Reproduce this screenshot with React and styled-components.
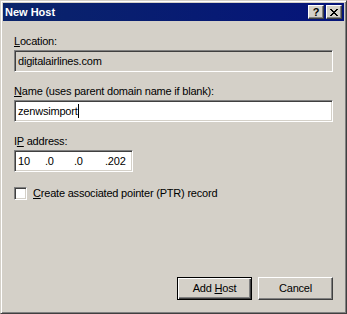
import React from "react";
import styled, { createGlobalStyle } from "styled-components";

const Global = createGlobalStyle`
  html, body { margin: 0; padding: 0; background: #d4d0c8; }
  body { font-family: "Liberation Sans", Arial, sans-serif; font-size: 11px; color: #000; }
  * { box-sizing: border-box; }
`;

const Window = styled.div`
  width: 347px;
  height: 314px;
  background: #d4d0c8;
  border: 1px solid;
  border-color: #d4d0c8 #404040 #404040 #d4d0c8;
  box-shadow: inset 1px 1px #fff, inset -1px -1px #808080;
  padding: 2px;
  display: flex;
  flex-direction: column;
`;

const TitleBar = styled.div`
  height: 18px;
  flex: none;
  display: flex;
  align-items: center;
  padding: 0 2px 0 2px;
  background: linear-gradient(to right, #0a246a, #05147a);
`;

const Title = styled.div`
  flex: 1;
  color: #fff;
  font-weight: bold;
  font-size: 11px;
  line-height: 13px;
  padding-left: 0px;
`;

const CapButton = styled.div`
  width: 16px;
  height: 14px;
  margin-left: ${(p) => p.$gap || 0}px;
  background: #d4d0c8;
  border: 1px solid;
  border-color: #fff #404040 #404040 #fff;
  box-shadow: inset -1px -1px #808080;
  display: flex;
  align-items: center;
  justify-content: center;
  font-weight: bold;
  font-size: 11px;
  line-height: 11px;
  color: #000;
`;

const Body = styled.div`
  flex: 1;
  display: flex;
  flex-direction: column;
  padding: 14px 11px 11px 11px;
  letter-spacing: -0.2px;
`;

const Group = styled.div`
  display: flex;
  flex-direction: column;
  margin-bottom: 13px;
`;

const Label = styled.div`
  line-height: 13px;
  margin-bottom: 2px;
  white-space: nowrap;
`;

const Key = styled.span`
  text-decoration: underline;
  text-underline-offset: 1px;
`;

const Field = styled.div`
  height: 22px;
  width: ${(p) => p.$width || "100%"};
  background: ${(p) => (p.$disabled ? "#d4d0c8" : "#fff")};
  border: 1px solid;
  border-color: #808080 #fff #fff #808080;
  box-shadow: inset 1px 1px #404040, inset -1px -1px #d4d0c8;
  padding: 0 3px;
  display: flex;
  align-items: center;
  line-height: 13px;
  white-space: nowrap;
`;

const Caret = styled.span`
  display: inline-block;
  width: 1px;
  height: 14px;
  background: #000;
  margin-left: 0px;
`;

const Octet = styled.span`
  width: ${(p) => p.$w}px;
  flex: none;
`;

const CheckRow = styled.label`
  display: flex;
  align-items: center;
  margin-top: 2px;
  line-height: 13px;
`;

const CheckBox = styled.span`
  width: 13px;
  height: 13px;
  flex: none;
  background: #fff;
  border: 1px solid;
  border-color: #808080 #fff #fff #808080;
  box-shadow: inset 1px 1px #404040, inset -1px -1px #d4d0c8;
  margin-right: 6px;
`;

const ButtonRow = styled.div`
  margin-top: auto;
  display: flex;
  justify-content: flex-end;
  gap: 6px;
`;

const Button = styled.div`
  width: 75px;
  height: 23px;
  display: flex;
  align-items: center;
  justify-content: center;
  background: #d4d0c8;
  border: 1px solid;
  border-color: ${(p) => (p.$default ? "#000" : "#fff #404040 #404040 #fff")};
  box-shadow: ${(p) =>
    p.$default
      ? "inset 1px 1px #fff, inset -1px -1px #404040, inset -2px -2px #808080"
      : "inset -1px -1px #808080"};
  line-height: 13px;
  padding-bottom: 1px;
`;

const CloseGlyph = () => (
  <svg width="8" height="7" viewBox="0 0 8 7" shapeRendering="crispEdges">
    <path
      fill="#000"
      d="M0 0h2v1H0zM6 0h2v1H6zM1 1h2v1H1zM5 1h2v1H5zM2 2h4v1H2zM3 3h2v1H3zM2 4h4v1H2zM1 5h2v1H1zM5 5h2v1H5zM0 6h2v1H0zM6 6h2v1H6z"
    />
  </svg>
);

export default function App() {
  return (
    <>
      <Global />
      <Window>
        <TitleBar>
          <Title>New Host</Title>
          <CapButton>?</CapButton>
          <CapButton $gap={2}>
            <CloseGlyph />
          </CapButton>
        </TitleBar>
        <Body>
          <Group>
            <Label>
              <Key>L</Key>ocation:
            </Label>
            <Field $disabled>digitalairlines.com</Field>
          </Group>
          <Group>
            <Label>
              <Key>N</Key>ame (uses parent domain name if blank):
            </Label>
            <Field>
              zenwsimport
              <Caret />
            </Field>
          </Group>
          <Group>
            <Label>
              I<Key>P</Key> address:
            </Label>
            <Field $width="119px">
              <Octet $w={27}>10</Octet>
              <Octet $w={29}>.0</Octet>
              <Octet $w={31}>.0</Octet>
              <Octet $w={26}>.202</Octet>
            </Field>
          </Group>
          <CheckRow>
            <CheckBox />
            <span>
              <Key>C</Key>reate associated pointer (PTR) record
            </span>
          </CheckRow>
          <ButtonRow>
            <Button $default>
              Add&nbsp;<Key>H</Key>ost
            </Button>
            <Button>Cancel</Button>
          </ButtonRow>
        </Body>
      </Window>
    </>
  );
}
